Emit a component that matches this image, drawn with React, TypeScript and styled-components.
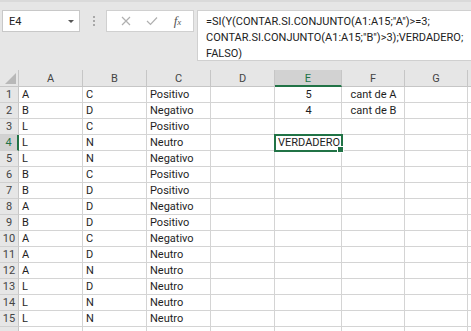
import React from 'react';
import styled, { createGlobalStyle } from 'styled-components';

const GlobalStyle = createGlobalStyle`
  html, body {
    margin: 0;
    padding: 0;
    background: #fff;
    overflow: hidden;
  }
  * {
    box-sizing: border-box;
  }
`;

const COLUMNS = ['A', 'B', 'C', 'D', 'E', 'F', 'G', ''];
const WIDTHS = [19, 64, 64, 64, 64, 67, 63, 63, 30];

const rows: string[][] = [
  ['A', 'C', 'Positivo', '', '5', 'cant de A'],
  ['B', 'D', 'Negativo', '', '4', 'cant de B'],
  ['L', 'C', 'Positivo'],
  ['L', 'N', 'Neutro', '', 'VERDADERO'],
  ['L', 'N', 'Negativo'],
  ['B', 'C', 'Positivo'],
  ['B', 'D', 'Positivo'],
  ['A', 'D', 'Negativo'],
  ['B', 'D', 'Positivo'],
  ['A', 'C', 'Negativo'],
  ['A', 'D', 'Neutro'],
  ['A', 'N', 'Neutro'],
  ['L', 'D', 'Neutro'],
  ['L', 'N', 'Neutro'],
  ['L', 'N', 'Neutro'],
  [],
];

// columns E and F are centred in the sheet
const CENTERED = [4, 5];
const SELECTED_ROW = 4;
const SELECTED_COL = 4;

const App: React.FC = () => {
  return (
    <Window>
      <GlobalStyle />
      <FormulaBar>
        <NameBox>
          <span>E4</span>
          <DropArrow />
        </NameBox>
        <Grip>
          <i />
          <i />
          <i />
        </Grip>
        <ButtonBox>
          <svg width='10' height='10' viewBox='0 0 10 10'>
            <path d='M1 1 L9 9 M9 1 L1 9' stroke='#b0b0b0' strokeWidth='1.2' fill='none' />
          </svg>
          <svg width='12' height='10' viewBox='0 0 12 10'>
            <path d='M1 5 L4.5 8.5 L11 1.5' stroke='#b0b0b0' strokeWidth='1.2' fill='none' />
          </svg>
          <Fx>
            f<small>x</small>
          </Fx>
        </ButtonBox>
        <FormulaBox>
          <div>=SI(Y(CONTAR.SI.CONJUNTO(A1:A15;"A")&gt;=3;</div>
          <div>CONTAR.SI.CONJUNTO(A1:A15;"B")&gt;3);VERDADERO;</div>
          <div>FALSO)</div>
        </FormulaBox>
      </FormulaBar>
      <Sheet>
        <Corner>
          <svg width='11' height='11' viewBox='0 0 11 11'>
            <path d='M11 0 L11 11 L0 11 Z' fill='#b8b8b8' />
          </svg>
        </Corner>
        {COLUMNS.map((c, i) => (
          <ColHeader key={c + i} $active={i === SELECTED_COL}>
            {c}
          </ColHeader>
        ))}
        {rows.map((row, r) => (
          <React.Fragment key={r}>
            <RowHeader $active={r + 1 === SELECTED_ROW}>{r < 15 ? r + 1 : ''}</RowHeader>
            {COLUMNS.map((_, c) => (
              <Cell
                key={c}
                $center={CENTERED.includes(c)}
                $selected={r + 1 === SELECTED_ROW && c === SELECTED_COL}
              >
                {row[c] || ''}
              </Cell>
            ))}
          </React.Fragment>
        ))}
      </Sheet>
    </Window>
  );
};

const Window = styled.div`
  width: 471px;
  height: 331px;
  overflow: hidden;
  font-family: Roboto, 'Liberation Sans', sans-serif;
  font-size: 11px;
  color: #1e1e1e;
`;

const FormulaBar = styled.div`
  display: flex;
  align-items: flex-start;
  height: 70px;
  padding: 10px 0 0 2px;
  background: #e6e6e6;
  border-top: 2px solid #dadada;
`;

const NameBox = styled.div`
  position: relative;
  flex-shrink: 0;
  display: flex;
  align-items: center;
  width: 78px;
  height: 22px;
  margin-top: -2px;
  padding-left: 6px;
  background: #fff;
  border: 1px solid #c8c8c8;
  color: #222;
`;

const DropArrow = styled.span`
  position: absolute;
  right: 5px;
  top: 9px;
  width: 0;
  height: 0;
  border-left: 3px solid transparent;
  border-right: 3px solid transparent;
  border-top: 3px solid #555;
`;

const Grip = styled.div`
  flex-shrink: 0;
  display: flex;
  flex-direction: column;
  gap: 2px;
  width: 2px;
  margin: 4px 11px 0 13px;

  i {
    display: block;
    width: 2px;
    height: 2px;
    background: #a8a8a8;
  }
`;

const ButtonBox = styled.div`
  flex-shrink: 0;
  display: flex;
  align-items: center;
  justify-content: space-around;
  width: 88px;
  height: 22px;
  margin-top: -2px;
  padding: 0 4px 0 6px;
  background: #fff;
  border: 1px solid #d0d0d0;
`;

const Fx = styled.span`
  font-family: 'Liberation Serif', serif;
  font-style: italic;
  font-size: 13px;
  color: #555;

  small {
    font-size: 9px;
  }
`;

const FormulaBox = styled.div`
  flex: 1;
  min-width: 0;
  height: 51px;
  margin: -2px -2px 0 3px;
  padding: 3px 0 0 8px;
  background: #fff;
  border: 1px solid #d0d0d0;
  line-height: 16px;
  white-space: nowrap;
  overflow: hidden;
  color: #222;
`;

const Sheet = styled.div`
  display: grid;
  grid-template-columns: ${WIDTHS.map((w) => w + 'px').join(' ')};
  grid-template-rows: 17px;
  grid-auto-rows: 16px;
`;

const Corner = styled.div`
  display: flex;
  align-items: flex-end;
  justify-content: flex-end;
  padding: 0 2px 2px 0;
  background: #e6e6e6;
  border-right: 1px solid #c6c6c6;
  border-bottom: 1px solid #c6c6c6;
`;

const ColHeader = styled.div<{ $active?: boolean }>`
  display: flex;
  align-items: center;
  justify-content: center;
  background: ${(p) => (p.$active ? '#d2d2d2' : '#e6e6e6')};
  color: ${(p) => (p.$active ? '#217346' : '#444')};
  border-right: 1px solid #c6c6c6;
  border-bottom: ${(p) => (p.$active ? '2px solid #217346' : '1px solid #c6c6c6')};
  padding-top: 1px;
`;

const RowHeader = styled.div<{ $active?: boolean }>`
  display: flex;
  align-items: flex-end;
  justify-content: center;
  line-height: 15px;
  background: ${(p) => (p.$active ? '#d2d2d2' : '#e6e6e6')};
  color: ${(p) => (p.$active ? '#217346' : '#444')};
  border-right: ${(p) => (p.$active ? '2px solid #217346' : '1px solid #c6c6c6')};
  border-bottom: 1px solid #d0d0d0;
`;

const Cell = styled.div<{ $center?: boolean; $selected?: boolean }>`
  position: relative;
  padding: 0 2px 0 3px;
  line-height: 15px;
  white-space: nowrap;
  text-align: ${(p) => (p.$center ? 'center' : 'left')};
  border-right: 1px solid #d4d4d4;
  border-bottom: 1px solid #d4d4d4;
  ${(p) =>
    p.$selected &&
    `
    outline: 2px solid #217346;
    outline-offset: -1px;
    z-index: 1;
    &::after {
      content: '';
      position: absolute;
      right: -3px;
      bottom: -3px;
      width: 5px;
      height: 5px;
      background: #217346;
      border: 1px solid #fff;
    }
  `}
`;

export default App;
